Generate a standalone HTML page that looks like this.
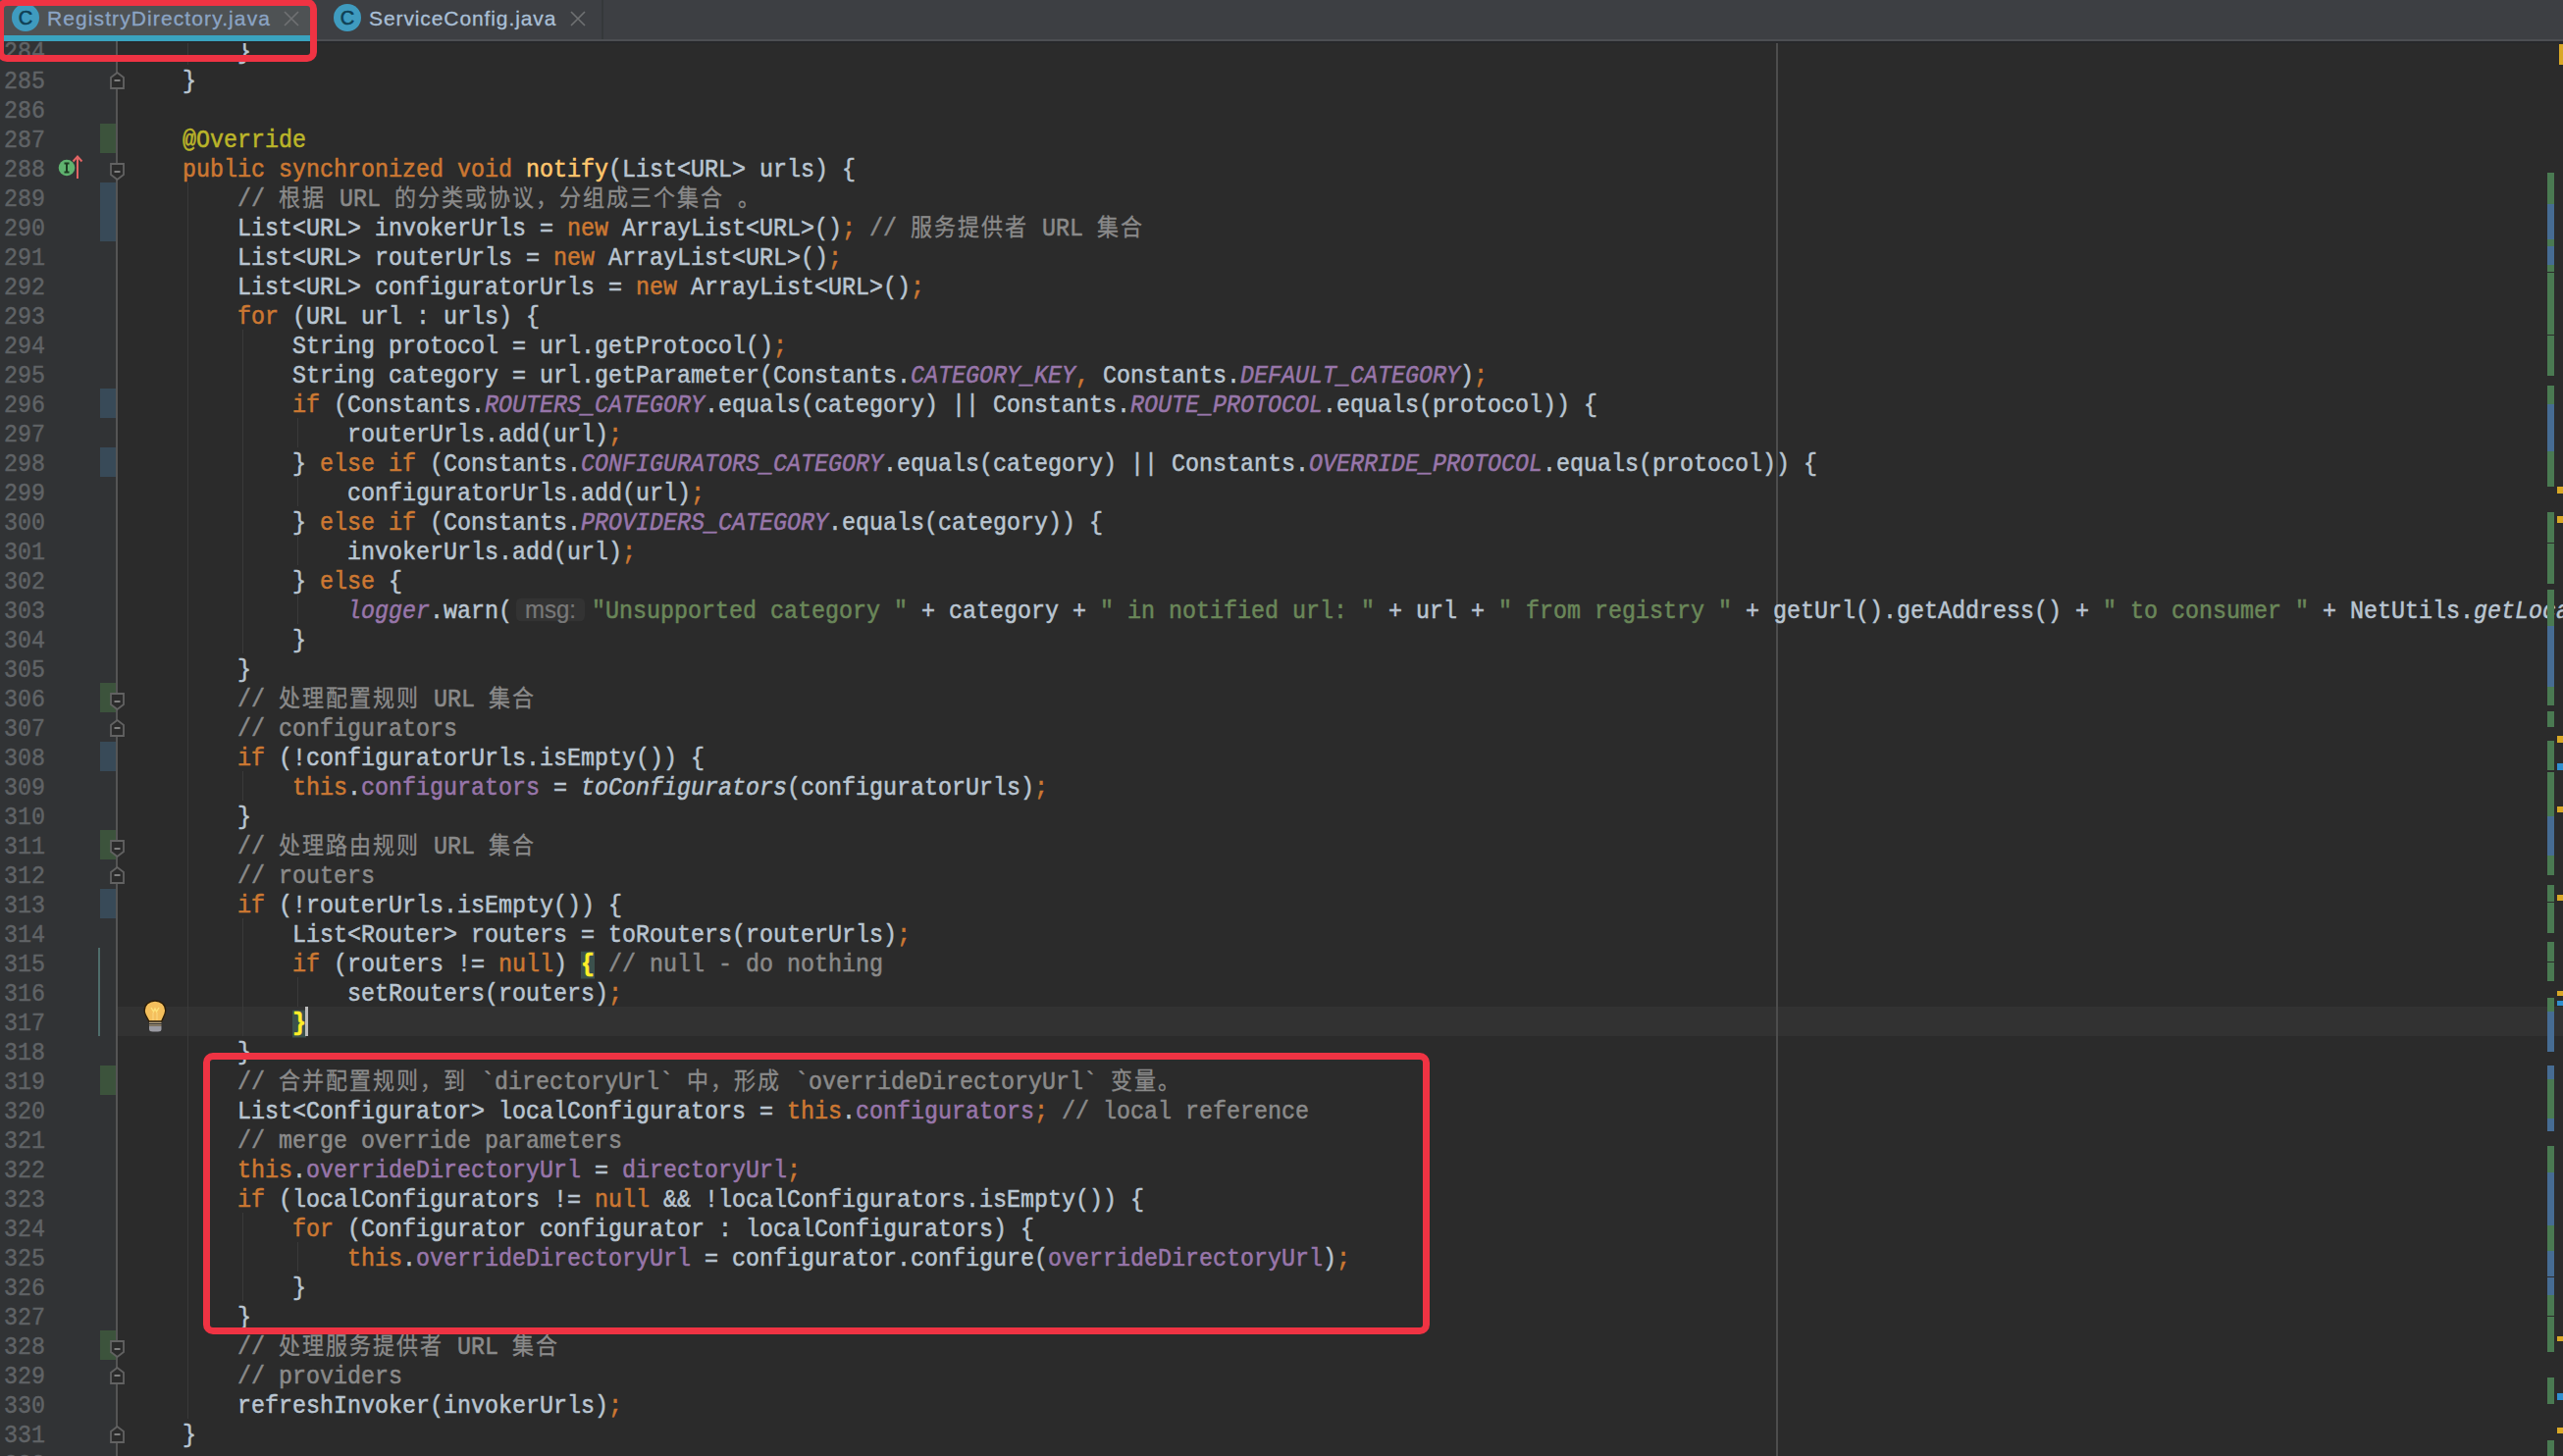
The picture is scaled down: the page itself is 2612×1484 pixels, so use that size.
<!DOCTYPE html><html lang="zh-CN"><head><meta charset="utf-8"><style>
*{margin:0;padding:0;box-sizing:border-box}
html,body{width:2612px;height:1484px;overflow:hidden;background:#2b2b2b}
body{position:relative;font-family:"Liberation Mono",monospace}
.abs{position:absolute}
#gutter{position:absolute;left:0;top:42px;width:120px;height:1442px;background:#313335}
.ln{position:absolute;left:0;width:46px;text-align:right;color:#606366;font-size:23.33px;line-height:30px;white-space:pre;-webkit-text-stroke:0.4px currentColor;transform-origin:0 21px;transform:scaleY(1.07)}
.code{position:absolute;left:130px;font-size:23.33px;line-height:30px;white-space:pre;color:#b9c5d1;-webkit-text-stroke:0.5px currentColor;transform-origin:0 21px;transform:scaleY(1.07)}
.k{color:#cc7832}
.a{color:#bbb529}
.c{color:#8a8a8a}
.s{color:#6a8759}
.f{color:#9876aa}
.sf{color:#9876aa;font-style:italic}
.m{color:#ffc66d}
.it{font-style:italic}
.br{color:#ffef28;background:#3b514d;font-weight:bold}
i.j{font-style:normal;display:inline-block;width:24px;line-height:1;font-size:22px;font-family:"Liberation Sans",sans-serif;-webkit-text-stroke:0.3px currentColor}
.hint{display:inline-block;width:81px;position:relative;height:1px}
.hint span{position:absolute;left:4px;top:-18px;width:70px;height:22px;border-radius:5px;background:#333333;color:#787878;font-family:"Liberation Sans",sans-serif;font-size:24px;line-height:22px;padding-left:9px;-webkit-text-stroke:0.2px currentColor}
.guide{position:absolute;width:1px;background:#3a3a3a}
.redbox{position:absolute;border:7px solid #ef3343;border-radius:10px}
</style></head><body><div class="abs" style="left:120px;top:1026px;width:2492px;height:30px;background:#323232"></div>
<div class="abs" style="left:1810px;top:42px;width:2px;height:1442px;background:#4d4d4d"></div>
<div id="gutter"></div>
<div class="abs" style="left:102px;top:126px;width:16px;height:30px;background:#3c533c"></div>
<div class="abs" style="left:102px;top:186px;width:16px;height:60px;background:#384a58"></div>
<div class="abs" style="left:102px;top:396px;width:16px;height:30px;background:#384a58"></div>
<div class="abs" style="left:102px;top:456px;width:16px;height:30px;background:#384a58"></div>
<div class="abs" style="left:102px;top:696px;width:16px;height:30px;background:#3c533c"></div>
<div class="abs" style="left:102px;top:756px;width:16px;height:30px;background:#384a58"></div>
<div class="abs" style="left:102px;top:846px;width:16px;height:30px;background:#3c533c"></div>
<div class="abs" style="left:102px;top:906px;width:16px;height:30px;background:#384a58"></div>
<div class="abs" style="left:102px;top:1086px;width:16px;height:30px;background:#3c533c"></div>
<div class="abs" style="left:102px;top:1356px;width:16px;height:30px;background:#3c533c"></div>
<div class="abs" style="left:100px;top:966px;width:2px;height:90px;background:#4f6d6b"></div>
<div class="abs" style="left:118px;top:42px;width:2px;height:1442px;background:#555555"></div>
<div class="guide" style="left:190.5px;top:36px;height:30px"></div>
<div class="guide" style="left:190.5px;top:186px;height:1260px"></div>
<div class="guide" style="left:246.5px;top:336px;height:330px"></div>
<div class="guide" style="left:302.5px;top:426px;height:30px"></div>
<div class="guide" style="left:302.5px;top:486px;height:30px"></div>
<div class="guide" style="left:302.5px;top:546px;height:30px"></div>
<div class="guide" style="left:302.5px;top:606px;height:30px"></div>
<div class="guide" style="left:246.5px;top:786px;height:30px"></div>
<div class="guide" style="left:246.5px;top:936px;height:120px"></div>
<div class="guide" style="left:302.5px;top:996px;height:30px"></div>
<div class="guide" style="left:246.5px;top:1236px;height:90px"></div>
<div class="guide" style="left:302.5px;top:1266px;height:30px"></div>
<div class="ln" style="top:39px">284</div>
<div class="code" style="top:39px">        }</div>
<div class="ln" style="top:69px">285</div>
<div class="code" style="top:69px">    }</div>
<div class="ln" style="top:99px">286</div>
<div class="ln" style="top:129px">287</div>
<div class="code" style="top:129px">    <span class="a">@Override</span></div>
<div class="ln" style="top:159px">288</div>
<div class="code" style="top:159px">    <span class="k">public synchronized void</span> <span class="m">notify</span>(List&lt;URL&gt; urls) {</div>
<div class="ln" style="top:189px">289</div>
<div class="code" style="top:189px">        <span class="c">// <i class="j">根</i><i class="j">据</i> URL <i class="j">的</i><i class="j">分</i><i class="j">类</i><i class="j">或</i><i class="j">协</i><i class="j">议</i><i class="j">，</i><i class="j">分</i><i class="j">组</i><i class="j">成</i><i class="j">三</i><i class="j">个</i><i class="j">集</i><i class="j">合</i> <i class="j">。</i></span></div>
<div class="ln" style="top:219px">290</div>
<div class="code" style="top:219px">        List&lt;URL&gt; invokerUrls = <span class="k">new</span> ArrayList&lt;URL&gt;()<span class="k">;</span> <span class="c">// <i class="j">服</i><i class="j">务</i><i class="j">提</i><i class="j">供</i><i class="j">者</i> URL <i class="j">集</i><i class="j">合</i></span></div>
<div class="ln" style="top:249px">291</div>
<div class="code" style="top:249px">        List&lt;URL&gt; routerUrls = <span class="k">new</span> ArrayList&lt;URL&gt;()<span class="k">;</span></div>
<div class="ln" style="top:279px">292</div>
<div class="code" style="top:279px">        List&lt;URL&gt; configuratorUrls = <span class="k">new</span> ArrayList&lt;URL&gt;()<span class="k">;</span></div>
<div class="ln" style="top:309px">293</div>
<div class="code" style="top:309px">        <span class="k">for</span> (URL url : urls) {</div>
<div class="ln" style="top:339px">294</div>
<div class="code" style="top:339px">            String protocol = url.getProtocol()<span class="k">;</span></div>
<div class="ln" style="top:369px">295</div>
<div class="code" style="top:369px">            String category = url.getParameter(Constants.<span class="sf">CATEGORY_KEY</span><span class="k">,</span> Constants.<span class="sf">DEFAULT_CATEGORY</span>)<span class="k">;</span></div>
<div class="ln" style="top:399px">296</div>
<div class="code" style="top:399px">            <span class="k">if</span> (Constants.<span class="sf">ROUTERS_CATEGORY</span>.equals(category) || Constants.<span class="sf">ROUTE_PROTOCOL</span>.equals(protocol)) {</div>
<div class="ln" style="top:429px">297</div>
<div class="code" style="top:429px">                routerUrls.add(url)<span class="k">;</span></div>
<div class="ln" style="top:459px">298</div>
<div class="code" style="top:459px">            } <span class="k">else if</span> (Constants.<span class="sf">CONFIGURATORS_CATEGORY</span>.equals(category) || Constants.<span class="sf">OVERRIDE_PROTOCOL</span>.equals(protocol)) {</div>
<div class="ln" style="top:489px">299</div>
<div class="code" style="top:489px">                configuratorUrls.add(url)<span class="k">;</span></div>
<div class="ln" style="top:519px">300</div>
<div class="code" style="top:519px">            } <span class="k">else if</span> (Constants.<span class="sf">PROVIDERS_CATEGORY</span>.equals(category)) {</div>
<div class="ln" style="top:549px">301</div>
<div class="code" style="top:549px">                invokerUrls.add(url)<span class="k">;</span></div>
<div class="ln" style="top:579px">302</div>
<div class="code" style="top:579px">            } <span class="k">else</span> {</div>
<div class="ln" style="top:609px">303</div>
<div class="code" style="top:609px">                <span class="sf">logger</span>.warn(<span class="hint"><span>msg:</span></span><span class="s">"Unsupported category "</span> + category + <span class="s">" in notified url: "</span> + url + <span class="s">" from registry "</span> + getUrl().getAddress() + <span class="s">" to consumer "</span> + NetUtils.<span class="it">getLocalHost</span>())<span class="k">;</span></div>
<div class="ln" style="top:639px">304</div>
<div class="code" style="top:639px">            }</div>
<div class="ln" style="top:669px">305</div>
<div class="code" style="top:669px">        }</div>
<div class="ln" style="top:699px">306</div>
<div class="code" style="top:699px">        <span class="c">// <i class="j">处</i><i class="j">理</i><i class="j">配</i><i class="j">置</i><i class="j">规</i><i class="j">则</i> URL <i class="j">集</i><i class="j">合</i></span></div>
<div class="ln" style="top:729px">307</div>
<div class="code" style="top:729px">        <span class="c">// configurators</span></div>
<div class="ln" style="top:759px">308</div>
<div class="code" style="top:759px">        <span class="k">if</span> (!configuratorUrls.isEmpty()) {</div>
<div class="ln" style="top:789px">309</div>
<div class="code" style="top:789px">            <span class="k">this</span>.<span class="f">configurators</span> = <span class="it">toConfigurators</span>(configuratorUrls)<span class="k">;</span></div>
<div class="ln" style="top:819px">310</div>
<div class="code" style="top:819px">        }</div>
<div class="ln" style="top:849px">311</div>
<div class="code" style="top:849px">        <span class="c">// <i class="j">处</i><i class="j">理</i><i class="j">路</i><i class="j">由</i><i class="j">规</i><i class="j">则</i> URL <i class="j">集</i><i class="j">合</i></span></div>
<div class="ln" style="top:879px">312</div>
<div class="code" style="top:879px">        <span class="c">// routers</span></div>
<div class="ln" style="top:909px">313</div>
<div class="code" style="top:909px">        <span class="k">if</span> (!routerUrls.isEmpty()) {</div>
<div class="ln" style="top:939px">314</div>
<div class="code" style="top:939px">            List&lt;Router&gt; routers = toRouters(routerUrls)<span class="k">;</span></div>
<div class="ln" style="top:969px">315</div>
<div class="code" style="top:969px">            <span class="k">if</span> (routers != <span class="k">null</span>) <span class="br">{</span> <span class="c">// null - do nothing</span></div>
<div class="ln" style="top:999px">316</div>
<div class="code" style="top:999px">                setRouters(routers)<span class="k">;</span></div>
<div class="ln" style="top:1029px">317</div>
<div class="code" style="top:1029px">            <span class="br">}</span></div>
<div class="ln" style="top:1059px">318</div>
<div class="code" style="top:1059px">        }</div>
<div class="ln" style="top:1089px">319</div>
<div class="code" style="top:1089px">        <span class="c">// <i class="j">合</i><i class="j">并</i><i class="j">配</i><i class="j">置</i><i class="j">规</i><i class="j">则</i><i class="j">，</i><i class="j">到</i> `directoryUrl` <i class="j">中</i><i class="j">，</i><i class="j">形</i><i class="j">成</i> `overrideDirectoryUrl` <i class="j">变</i><i class="j">量</i><i class="j">。</i></span></div>
<div class="ln" style="top:1119px">320</div>
<div class="code" style="top:1119px">        List&lt;Configurator&gt; localConfigurators = <span class="k">this</span>.<span class="f">configurators</span><span class="k">;</span> <span class="c">// local reference</span></div>
<div class="ln" style="top:1149px">321</div>
<div class="code" style="top:1149px">        <span class="c">// merge override parameters</span></div>
<div class="ln" style="top:1179px">322</div>
<div class="code" style="top:1179px">        <span class="k">this</span>.<span class="f">overrideDirectoryUrl</span> = <span class="f">directoryUrl</span><span class="k">;</span></div>
<div class="ln" style="top:1209px">323</div>
<div class="code" style="top:1209px">        <span class="k">if</span> (localConfigurators != <span class="k">null</span> &amp;&amp; !localConfigurators.isEmpty()) {</div>
<div class="ln" style="top:1239px">324</div>
<div class="code" style="top:1239px">            <span class="k">for</span> (Configurator configurator : localConfigurators) {</div>
<div class="ln" style="top:1269px">325</div>
<div class="code" style="top:1269px">                <span class="k">this</span>.<span class="f">overrideDirectoryUrl</span> = configurator.configure(<span class="f">overrideDirectoryUrl</span>)<span class="k">;</span></div>
<div class="ln" style="top:1299px">326</div>
<div class="code" style="top:1299px">            }</div>
<div class="ln" style="top:1329px">327</div>
<div class="code" style="top:1329px">        }</div>
<div class="ln" style="top:1359px">328</div>
<div class="code" style="top:1359px">        <span class="c">// <i class="j">处</i><i class="j">理</i><i class="j">服</i><i class="j">务</i><i class="j">提</i><i class="j">供</i><i class="j">者</i> URL <i class="j">集</i><i class="j">合</i></span></div>
<div class="ln" style="top:1389px">329</div>
<div class="code" style="top:1389px">        <span class="c">// providers</span></div>
<div class="ln" style="top:1419px">330</div>
<div class="code" style="top:1419px">        refreshInvoker(invokerUrls)<span class="k">;</span></div>
<div class="ln" style="top:1449px">331</div>
<div class="code" style="top:1449px">    }</div>
<div class="ln" style="top:1479px">332</div>
<div class="abs" style="left:311px;top:1026px;width:3px;height:30px;background:#bbbbbb"></div>
<svg class="abs" style="left:112px;top:73px" width="15" height="18" viewBox="0 0 15 18"><path d="M1 17 L1 6 L7.5 1 L14 6 L14 17 Z" fill="#2b2b2b" stroke="#626262" stroke-width="1.8"/><path d="M4.5 9H10.5" stroke="#8a8a8a" stroke-width="1.8"/></svg>
<svg class="abs" style="left:112px;top:733px" width="15" height="18" viewBox="0 0 15 18"><path d="M1 17 L1 6 L7.5 1 L14 6 L14 17 Z" fill="#2b2b2b" stroke="#626262" stroke-width="1.8"/><path d="M4.5 9H10.5" stroke="#8a8a8a" stroke-width="1.8"/></svg>
<svg class="abs" style="left:112px;top:883px" width="15" height="18" viewBox="0 0 15 18"><path d="M1 17 L1 6 L7.5 1 L14 6 L14 17 Z" fill="#2b2b2b" stroke="#626262" stroke-width="1.8"/><path d="M4.5 9H10.5" stroke="#8a8a8a" stroke-width="1.8"/></svg>
<svg class="abs" style="left:112px;top:1393px" width="15" height="18" viewBox="0 0 15 18"><path d="M1 17 L1 6 L7.5 1 L14 6 L14 17 Z" fill="#2b2b2b" stroke="#626262" stroke-width="1.8"/><path d="M4.5 9H10.5" stroke="#8a8a8a" stroke-width="1.8"/></svg>
<svg class="abs" style="left:112px;top:1453px" width="15" height="18" viewBox="0 0 15 18"><path d="M1 17 L1 6 L7.5 1 L14 6 L14 17 Z" fill="#2b2b2b" stroke="#626262" stroke-width="1.8"/><path d="M4.5 9H10.5" stroke="#8a8a8a" stroke-width="1.8"/></svg>
<svg class="abs" style="left:112px;top:166px" width="15" height="18" viewBox="0 0 15 18"><path d="M1 1 L14 1 L14 12 L7.5 17 L1 12 Z" fill="#2b2b2b" stroke="#626262" stroke-width="1.8"/><path d="M4.5 9H10.5" stroke="#8a8a8a" stroke-width="1.8"/></svg>
<svg class="abs" style="left:112px;top:706px" width="15" height="18" viewBox="0 0 15 18"><path d="M1 1 L14 1 L14 12 L7.5 17 L1 12 Z" fill="#2b2b2b" stroke="#626262" stroke-width="1.8"/><path d="M4.5 9H10.5" stroke="#8a8a8a" stroke-width="1.8"/></svg>
<svg class="abs" style="left:112px;top:856px" width="15" height="18" viewBox="0 0 15 18"><path d="M1 1 L14 1 L14 12 L7.5 17 L1 12 Z" fill="#2b2b2b" stroke="#626262" stroke-width="1.8"/><path d="M4.5 9H10.5" stroke="#8a8a8a" stroke-width="1.8"/></svg>
<svg class="abs" style="left:112px;top:1366px" width="15" height="18" viewBox="0 0 15 18"><path d="M1 1 L14 1 L14 12 L7.5 17 L1 12 Z" fill="#2b2b2b" stroke="#626262" stroke-width="1.8"/><path d="M4.5 9H10.5" stroke="#8a8a8a" stroke-width="1.8"/></svg>
<svg class="abs" style="left:58px;top:157px" width="30" height="28" viewBox="0 0 30 28"><circle cx="10" cy="14" r="8.3" fill="#5fb36f"/><path d="M7.5 9.5H12.5M7.5 18.5H12.5M10 9.5V18.5" stroke="#1d3b22" stroke-width="2"/><path d="M21 25V3M16.5 7.5L21 2.5L25.5 7.5" stroke="#e26464" stroke-width="2" fill="none"/></svg>
<svg class="abs" style="left:144px;top:1017px" width="28" height="36" viewBox="0 0 28 36"><path d="M7.8 24 C5.5 19.5 3.2 16.5 3.2 13 C3.2 7 8 3 14 3 C20 3 24.7 7 24.7 13 C24.7 16.5 22.5 19.5 20.7 24 Z" fill="#f4bf5c" stroke="#2a1c08" stroke-width="1.3"/><path d="M10 10 L12.5 14 L14 11 L15.5 14 L18 10" stroke="#fde27a" stroke-width="1.4" fill="none"/><path d="M12 15V23M16 15V23" stroke="#f9d37a" stroke-width="1.2"/><path d="M8 25.3H20.5M8 27.8H20.5" stroke="#b9a584" stroke-width="1.3"/><path d="M8 29 L20.5 29 L20.5 32 Q20.5 34.5 17 34.5 L11.5 34.5 Q8 34.5 8 32 Z" fill="#9a9aa2"/></svg>
<div class="abs" style="left:2596px;top:176px;width:7px;height:32px;background:#4a7a52"></div>
<div class="abs" style="left:2596px;top:208px;width:7px;height:36px;background:#466c93"></div>
<div class="abs" style="left:2596px;top:244px;width:7px;height:7px;background:#4a7a52"></div>
<div class="abs" style="left:2596px;top:251px;width:7px;height:19px;background:#466c93"></div>
<div class="abs" style="left:2596px;top:270px;width:7px;height:7px;background:#4a7a52"></div>
<div class="abs" style="left:2596px;top:278px;width:7px;height:63px;background:#4a7a52"></div>
<div class="abs" style="left:2596px;top:342px;width:7px;height:41px;background:#4a7a52"></div>
<div class="abs" style="left:2596px;top:393px;width:7px;height:19px;background:#4a7a52"></div>
<div class="abs" style="left:2596px;top:412px;width:7px;height:48px;background:#466c93"></div>
<div class="abs" style="left:2596px;top:460px;width:7px;height:36px;background:#4a7a52"></div>
<div class="abs" style="left:2596px;top:522px;width:7px;height:31px;background:#4a7a52"></div>
<div class="abs" style="left:2596px;top:554px;width:7px;height:41px;background:#4a7a52"></div>
<div class="abs" style="left:2596px;top:601px;width:7px;height:37px;background:#4a7a52"></div>
<div class="abs" style="left:2596px;top:638px;width:7px;height:62px;background:#466c93"></div>
<div class="abs" style="left:2596px;top:700px;width:7px;height:19px;background:#4a7a52"></div>
<div class="abs" style="left:2596px;top:725px;width:7px;height:16px;background:#4a7a52"></div>
<div class="abs" style="left:2596px;top:755px;width:7px;height:30px;background:#4a7a52"></div>
<div class="abs" style="left:2596px;top:787px;width:7px;height:45px;background:#4a7a52"></div>
<div class="abs" style="left:2596px;top:832px;width:7px;height:40px;background:#466c93"></div>
<div class="abs" style="left:2596px;top:872px;width:7px;height:20px;background:#4a7a52"></div>
<div class="abs" style="left:2596px;top:902px;width:7px;height:17px;background:#4a7a52"></div>
<div class="abs" style="left:2596px;top:920px;width:7px;height:31px;background:#4a7a52"></div>
<div class="abs" style="left:2596px;top:960px;width:7px;height:20px;background:#4a7a52"></div>
<div class="abs" style="left:2596px;top:981px;width:7px;height:19px;background:#4a7a52"></div>
<div class="abs" style="left:2596px;top:1017px;width:7px;height:14px;background:#4a7a52"></div>
<div class="abs" style="left:2596px;top:1031px;width:7px;height:41px;background:#466c93"></div>
<div class="abs" style="left:2596px;top:1086px;width:7px;height:14px;background:#466c93"></div>
<div class="abs" style="left:2596px;top:1100px;width:7px;height:40px;background:#4a7a52"></div>
<div class="abs" style="left:2596px;top:1140px;width:7px;height:13px;background:#466c93"></div>
<div class="abs" style="left:2596px;top:1168px;width:7px;height:27px;background:#4a7a52"></div>
<div class="abs" style="left:2596px;top:1195px;width:7px;height:54px;background:#466c93"></div>
<div class="abs" style="left:2596px;top:1249px;width:7px;height:26px;background:#4a7a52"></div>
<div class="abs" style="left:2596px;top:1275px;width:7px;height:26px;background:#466c93"></div>
<div class="abs" style="left:2596px;top:1302px;width:7px;height:18px;background:#466c93"></div>
<div class="abs" style="left:2596px;top:1320px;width:7px;height:21px;background:#4a7a52"></div>
<div class="abs" style="left:2596px;top:1342px;width:7px;height:36px;background:#4a7a52"></div>
<div class="abs" style="left:2596px;top:1404px;width:7px;height:27px;background:#4a7a52"></div>
<div class="abs" style="left:2596px;top:1468px;width:7px;height:16px;background:#4a7a52"></div>
<div class="abs" style="left:2608px;top:45px;width:4px;height:21px;background:#d9a826"></div>
<div class="abs" style="left:2606px;top:496px;width:6px;height:7px;background:#d9a826"></div>
<div class="abs" style="left:2606px;top:526px;width:6px;height:7px;background:#d9a826"></div>
<div class="abs" style="left:2606px;top:750px;width:6px;height:7px;background:#d9a826"></div>
<div class="abs" style="left:2606px;top:822px;width:6px;height:6px;background:#d9a826"></div>
<div class="abs" style="left:2606px;top:912px;width:6px;height:6px;background:#d9a826"></div>
<div class="abs" style="left:2606px;top:1010px;width:6px;height:5px;background:#d9a826"></div>
<div class="abs" style="left:2606px;top:1362px;width:6px;height:5px;background:#d9a826"></div>
<div class="abs" style="left:2606px;top:1455px;width:6px;height:6px;background:#d9a826"></div>
<div class="abs" style="left:2606px;top:778px;width:6px;height:7px;background:#2f8fd0"></div>
<div class="abs" style="left:2606px;top:1020px;width:6px;height:5px;background:#2f8fd0"></div>
<div class="abs" style="left:2606px;top:1420px;width:6px;height:7px;background:#2f8fd0"></div>
<div class="abs" style="left:0;top:0;width:2612px;height:40px;background:#3d3f43"></div>
<div class="abs" style="left:0;top:40px;width:2612px;height:2px;background:#4c4e52"></div>
<div class="abs" style="left:120px;top:42px;width:2492px;height:2px;background:#27282b"></div>
<div class="abs" style="left:0;top:0;width:316px;height:36px;background:#4e5254"></div>
<div class="abs" style="left:0;top:36px;width:316px;height:6px;background:#3aa3bf"></div>
<div class="abs" style="left:613px;top:0;width:2px;height:40px;background:#35383a"></div>
<div class="abs" style="left:12px;top:4px;width:28px;height:28px;border-radius:50%;background:#3f9bbf;color:#0f3f55;font-family:'Liberation Sans',sans-serif;font-size:20px;line-height:28px;text-align:center;-webkit-text-stroke:0.6px currentColor">C</div>
<div class="abs" style="left:340px;top:4px;width:28px;height:28px;border-radius:50%;background:#3f9bbf;color:#0f3f55;font-family:'Liberation Sans',sans-serif;font-size:20px;line-height:28px;text-align:center;-webkit-text-stroke:0.6px currentColor">C</div>
<div class="abs" style="left:48px;top:4px;height:30px;font-family:'Liberation Sans',sans-serif;font-size:21px;letter-spacing:1.1px;-webkit-text-stroke:0.3px currentColor;line-height:30px;color:#8ba4c4;white-space:pre">RegistryDirectory.java</div>
<div class="abs" style="left:376px;top:4px;height:30px;font-family:'Liberation Sans',sans-serif;font-size:21px;letter-spacing:0.9px;-webkit-text-stroke:0.3px currentColor;line-height:30px;color:#a9bfd6;white-space:pre">ServiceConfig.java</div>
<svg class="abs" style="left:289px;top:11px" width="16" height="16" viewBox="0 0 16 16"><path d="M1 1L15 15M15 1L1 15" stroke="#6f7173" stroke-width="1.6"/></svg>
<svg class="abs" style="left:581px;top:11px" width="16" height="16" viewBox="0 0 16 16"><path d="M1 1L15 15M15 1L1 15" stroke="#6f7173" stroke-width="1.6"/></svg>
<div class="redbox" style="left:-3px;top:-1px;width:326px;height:64px"></div>
<div class="redbox" style="left:207px;top:1073px;width:1250px;height:287px"></div></body></html>
